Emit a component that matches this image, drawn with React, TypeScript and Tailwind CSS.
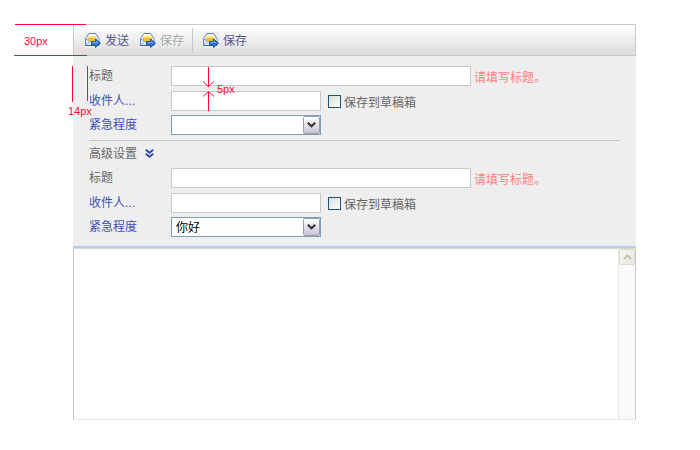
import { useId } from 'react';

function SendIcon() {
  return (
    <svg className="block size-4 shrink-0" viewBox="0 0 16 16" aria-hidden="true">
      <rect width="16" height="16" fill="#eeeeee" />
      <path d="M.5 6.500 4 1.500 H10.500 L14 6.500 V13.500 H.5Z" fill="#f4f8ff" stroke="#5b7cc6" />
      <path d="M3 4 H11.500 V7.500 L10 9 H4.500 L3 7.500Z" fill="#ffe68a" />
      <path d="M2 6 H12.500 V7.500 L10.500 9 H4 L2 7.500Z" fill="#f2b93c" />
      <path d="M4.500 3.500 H10" stroke="#fff7d0" />
      <path d="M1 7 4.500 9.500 H10 L13.500 7 V13 H1Z" fill="#e3eefc" />
      <path d="M1 7.200 4.500 9.500 H9 M1.200 13 4.800 9.800" fill="none" stroke="#7d9edb" strokeWidth=".9" />
      <path d="M.5 13.500 H8" stroke="#3f62b4" />
      <path d="M6.500 9.500 H10.500 V7 L15.500 11.200 10.500 15.500 V13.500 H6.500Z" fill="#2f74d8" stroke="#2450a6" />
      <path d="M7.500 10.500 H11.500 V9.500 L13.200 11" fill="none" stroke="#78b2f4" />
    </svg>
  );
}

function ToolButton({ text, disabled = false }: { text: string; disabled?: boolean }) {
  return (
    <button
      type="button"
      disabled={disabled}
      className="flex items-center gap-1 text-[#55558f] disabled:text-[#a5a5a5] disabled:[text-shadow:1px_1px_0_white]"
    >
      <SendIcon />
      <span className="pt-0.5">{text}</span>
    </button>
  );
}

const labelBase = 'w-[82px] shrink-0';
const inputBase = 'h-5 border border-[#c8c8c8] bg-white px-1 text-black outline-none';

function Fields({ urgency }: { urgency: string }) {
  const id = useId();
  return (
    <div>
      <div className="flex h-5 items-center">
        <label htmlFor={id + 'title'} className={labelBase}>标题</label>
        <input id={id + 'title'} type="text" className={inputBase + ' w-[300px]'} />
        <span className="ml-[3px] pt-1 text-[#ff8080]">请填写标题。</span>
      </div>
      <div className="mt-[5px] flex h-5 items-center">
        <label htmlFor={id + 'to'} className={labelBase + ' text-[#3c50b8]'}>收件人...</label>
        <input id={id + 'to'} type="text" className={inputBase + ' w-[150px]'} />
        <input
          id={id + 'draft'}
          type="checkbox"
          className="ml-[7px] size-[13px] appearance-none border border-[#1c5180] bg-linear-to-br from-[#dcdcd7] to-white"
        />
        <label htmlFor={id + 'draft'} className="ml-[3px] pt-1">保存到草稿箱</label>
      </div>
      <div className="mt-1 flex h-5 items-center">
        <label htmlFor={id + 'urgency'} className={labelBase + ' text-[#3c50b8]'}>紧急程度</label>
        <div className="relative">
          <select
            id={id + 'urgency'}
            defaultValue={urgency}
            className="block h-5 w-[150px] appearance-none border border-[#7f9db9] bg-white px-1 pt-0.5 text-black outline-none"
          >
            <option value=""></option>
            <option value="你好">你好</option>
          </select>
          <span className="pointer-events-none absolute inset-y-px right-px flex w-[17px] items-center justify-center rounded-xs border border-[#9c9caa] bg-linear-to-b from-white to-[#c6c6d6]">
            <svg className="h-[6px] w-[9px]" viewBox="0 0 9 6" aria-hidden="true">
              <path d="M.8 .8 4.500 4.300 8.200 .8" fill="none" stroke="#333" strokeWidth="2.200" />
            </svg>
          </span>
        </div>
      </div>
    </div>
  );
}

function Measurements() {
  return (
    <div className="pointer-events-none absolute top-0 left-0 font-['Liberation_Sans',Arial,sans-serif] text-[11px] leading-3 text-[#ff0a32]">
      <svg className="block h-[120px] w-[240px]" viewBox="0 0 240 120" fill="none" stroke="#ff0a32" aria-hidden="true">
        <path d="M15 24.500H86 M14 55.500H87 M72.500 66V102 M87.500 66V101" />
        <path d="M208.500 67V87 M208.500 92V111" />
        <path d="M203 81.500 208.500 86.500 214 81.500 M203 96.500 208.500 91.500 214 96.500" />
      </svg>
      <span className="absolute top-[35px] left-6">30px</span>
      <span className="absolute top-[105px] left-[68px]">14px</span>
      <span className="absolute top-[83px] left-[217px]">5px</span>
    </div>
  );
}

export default function App() {
  return (
    <div className="relative min-h-screen bg-white pt-6 pr-16 pb-[30px] pl-[73px] font-['Liberation_Sans','Noto_Sans_CJK_SC',sans-serif] text-xs leading-4 text-[#666]">
      <main>
        <div role="toolbar" className="flex h-8 items-center border border-[#c8c8c8] bg-linear-to-b from-white to-[#dcdcdc] pl-[11px]">
          <ToolButton text="发送" />
          <div className="ml-[11px] flex items-center">
            <ToolButton text="保存" disabled />
          </div>
          <div className="ml-2 flex h-6 items-center border-l border-[#c8c8c8] pl-[10px]">
            <ToolButton text="保存" />
          </div>
        </div>
        <form className="bg-[#eee] px-4 pt-2.5 pb-[9px]">
          <Fields urgency="" />
          <hr className="mt-[5px] border-t border-[#c8c8c8]" />
          <button type="button" className="mb-[3px] flex h-6 items-center gap-2">
            <span className="pt-0.5">高级设置</span>
            <svg className="size-[9px]" viewBox="0 0 9 9" fill="none" stroke="#2945b5" strokeWidth="1.800" aria-hidden="true">
              <path d="M.8 .8 4.500 3.800 8.200 .8 M.8 4.800 4.500 7.800 8.200 4.800" />
            </svg>
          </button>
          <Fields urgency="你好" />
        </form>
        <div className="flex border-t-2 border-[#b4cef0]">
          <textarea
            aria-label="正文"
            className="block h-[172px] min-w-0 flex-1 resize-none border border-t-[#d8d8d8] border-r-0 border-b-[#ece9d8] border-l-[#c8c8c8] bg-white p-1 text-black outline-none"
          />
          <div className="w-[18px] border border-t-[#d8d8d8] border-r-[#c8c8c8] border-b-[#ece9d8] border-l-[#e8e8ec] bg-[#fafafd]">
            <button type="button" aria-label="Scroll up" className="flex h-4 w-full items-center justify-center rounded-xs border border-[#dedbcb] bg-linear-to-br from-[#f8f7f0] to-[#eae8da]">
              <svg className="h-[6px] w-[9px]" viewBox="0 0 9 6" aria-hidden="true">
                <path d="M.8 5.200 4.500 1.500 8.200 5.200" fill="none" stroke="#c3c1b8" strokeWidth="2" />
              </svg>
            </button>
          </div>
        </div>
      </main>
      <Measurements />
    </div>
  );
}
